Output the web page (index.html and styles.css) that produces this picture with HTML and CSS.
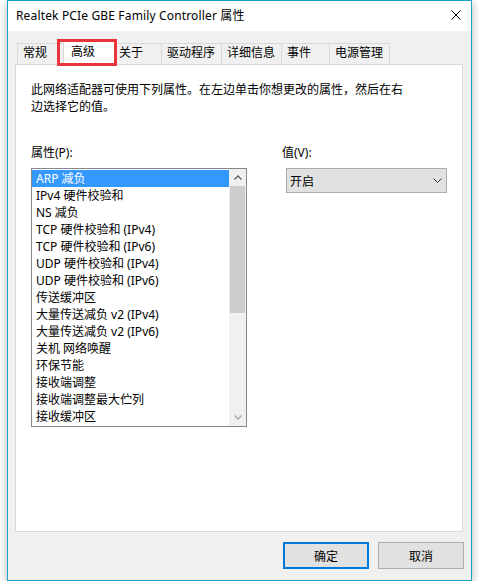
FILE: index.html
```html
<!DOCTYPE html>
<html lang="zh-CN">
<head>
    <meta charset="UTF-8">
    <title>Realtek PCIe GBE Family Controller 属性</title>
    <link rel="stylesheet" href="styles.css">
</head>
<body>
    <div class="window">
        <div class="titlebar">
            <span class="title">Realtek PCIe GBE Family Controller 属性</span>
            <svg class="close" width="10" height="10" viewBox="0 0 10 10">
                <path d="M0.5 0.5 L9.5 9.5 M9.5 0.5 L0.5 9.5" stroke="#000" stroke-width="1" fill="none"/>
            </svg>
        </div>
        <div class="content">
            <div class="tabs">
                <div class="tab">常规</div>
                <div class="tab tab-active">高级</div>
                <div class="tab">关于</div>
                <div class="tab">驱动程序</div>
                <div class="tab">详细信息</div>
                <div class="tab">事件</div>
                <div class="tab tab-last">电源管理</div>
            </div>
            <div class="panel">
                <p class="desc">此网络适配器可使用下列属性。在左边单击你想更改的属性，然后在右<br>边选择它的值。</p>
                <div class="props">
                    <div class="prop-col">
                        <div class="label">属性(P):</div>
                        <div class="listbox">
                            <ul class="items">
                                <li class="selected">ARP 减负</li>
                                <li>IPv4 硬件校验和</li>
                                <li>NS 减负</li>
                                <li>TCP 硬件校验和 (IPv4)</li>
                                <li>TCP 硬件校验和 (IPv6)</li>
                                <li>UDP 硬件校验和 (IPv4)</li>
                                <li>UDP 硬件校验和 (IPv6)</li>
                                <li>传送缓冲区</li>
                                <li>大量传送减负 v2 (IPv4)</li>
                                <li>大量传送减负 v2 (IPv6)</li>
                                <li>关机 网络唤醒</li>
                                <li>环保节能</li>
                                <li>接收端调整</li>
                                <li>接收端调整最大伫列</li>
                                <li>接收缓冲区</li>
                            </ul>
                            <div class="scrollbar">
                                <div class="sb-btn">
                                    <svg width="8" height="5" viewBox="0 0 8 5"><path d="M0.5 4.5 L4 1 L7.5 4.5" stroke="#606060" stroke-width="1.3" fill="none"/></svg>
                                </div>
                                <div class="sb-thumb"></div>
                                <div class="sb-track"></div>
                                <div class="sb-btn">
                                    <svg width="8" height="5" viewBox="0 0 8 5"><path d="M0.5 0.5 L4 4 L7.5 0.5" stroke="#a6a6a6" stroke-width="1.3" fill="none"/></svg>
                                </div>
                            </div>
                        </div>
                    </div>
                    <div class="value-col">
                        <div class="label">值(V):</div>
                        <div class="combo">
                            <span>开启</span>
                            <svg width="9" height="5" viewBox="0 0 9 5"><path d="M0.5 0.5 L4.5 4.5 L8.5 0.5" stroke="#333" stroke-width="1" fill="none"/></svg>
                        </div>
                    </div>
                </div>
            </div>
            <div class="buttons">
                <button class="btn btn-default">确定</button>
                <button class="btn">取消</button>
            </div>
        </div>
        <div class="mark"></div>
    </div>
</body>
</html>
```

FILE: styles.css
```css
body {
    margin: 0;
    background-color: #fff;
    font-family: "Noto Sans", "Noto Sans CJK SC", sans-serif;
    font-size: 12px;
    color: #000;
}

.window {
    position: relative;
    margin-left: 7px;
    width: 465px;
    height: 581px;
    box-sizing: border-box;
    border: 1px solid #1ba1c6;
    background-color: #f0f0f0;
    box-shadow: 0 2px 9px rgba(0, 0, 0, 0.3);
    display: flex;
    flex-direction: column;
}

.titlebar {
    height: 30px;
    background-color: #fff;
    display: flex;
    align-items: center;
    justify-content: space-between;
    padding: 0 10px 0 8px;
}

.title {
    font-size: 12px;
    line-height: 30px;
    letter-spacing: 0.15px;
}

.close {
    margin-bottom: 2px;
}

.content {
    flex: 1;
    display: flex;
    flex-direction: column;
    padding: 10px 8px 11px 7px;
}

.tabs {
    display: flex;
    align-items: flex-end;
    height: 24px;
    padding-left: 2px;
    margin-bottom: -1px;
    position: relative;
    z-index: 1;
}

.tab {
    box-sizing: border-box;
    min-width: 48px;
    height: 21px;
    margin-bottom: 1px;
    padding: 0 6px 2px 5px;
    line-height: 18px;
    border-top: 1px solid #d9d9d9;
    border-left: 1px solid #d9d9d9;
    background-color: #f0f0f0;
}

.tab-last {
    border-right: 1px solid #d9d9d9;
}

.tab-active {
    position: relative;
    z-index: 2;
    width: 52px;
    height: 24px;
    margin: 0 -2px 0 -2px;
    padding: 0 0 0 7px;
    line-height: 19px;
    border: 1px solid #d9d9d9;
    border-bottom: none;
    background-color: #fff;
}

.panel {
    flex: 1;
    background-color: #fff;
    border: 1px solid #d9d9d9;
    padding: 16px 15px;
}

.desc {
    margin: 0;
    line-height: 17px;
}

.props {
    display: flex;
    margin-top: 29px;
}

.label {
    line-height: 17px;
}

.prop-col {
    width: 217px;
}

.listbox {
    margin-top: 7px;
    height: 259px;
    box-sizing: border-box;
    border: 1px solid #828790;
    display: flex;
}

.items {
    flex: 1;
    list-style: none;
    margin: 0;
    padding: 1px 0;
}

.items li {
    height: 17px;
    line-height: 17px;
    padding-left: 4px;
    white-space: nowrap;
}

.items li.selected {
    background-color: #3399ff;
    color: #fff;
}

.scrollbar {
    width: 17px;
    background-color: #f0f0f0;
    display: flex;
    flex-direction: column;
}

.sb-btn {
    height: 17px;
    display: flex;
    align-items: center;
    justify-content: center;
}

.sb-thumb {
    height: 127px;
    margin: 0 1px;
    background-color: #cdcdcd;
}

.sb-track {
    flex: 1;
}

.value-col {
    margin-left: 35px;
}

.combo {
    margin: 7px 0 0 4px;
    width: 161px;
    height: 25px;
    box-sizing: border-box;
    border: 1px solid #adadad;
    background-color: #e1e1e1;
    display: flex;
    align-items: center;
    justify-content: space-between;
    padding: 0 4px 0 3px;
}

.buttons {
    display: flex;
    justify-content: flex-end;
    gap: 9px;
    margin: 10px -1px 0 0;
}

.btn {
    width: 86px;
    height: 27px;
    box-sizing: border-box;
    border: 1px solid #adadad;
    background-color: #e1e1e1;
    font-family: "Noto Sans", "Noto Sans CJK SC", sans-serif;
    font-size: 12px;
    color: #000;
    padding: 0;
}

.btn-default {
    border: 2px solid #0078d7;
}

.mark {
    position: absolute;
    z-index: 5;
    left: 49px;
    top: 38px;
    width: 60px;
    height: 27px;
    box-sizing: border-box;
    border: 3px solid #e8343a;
}
```
